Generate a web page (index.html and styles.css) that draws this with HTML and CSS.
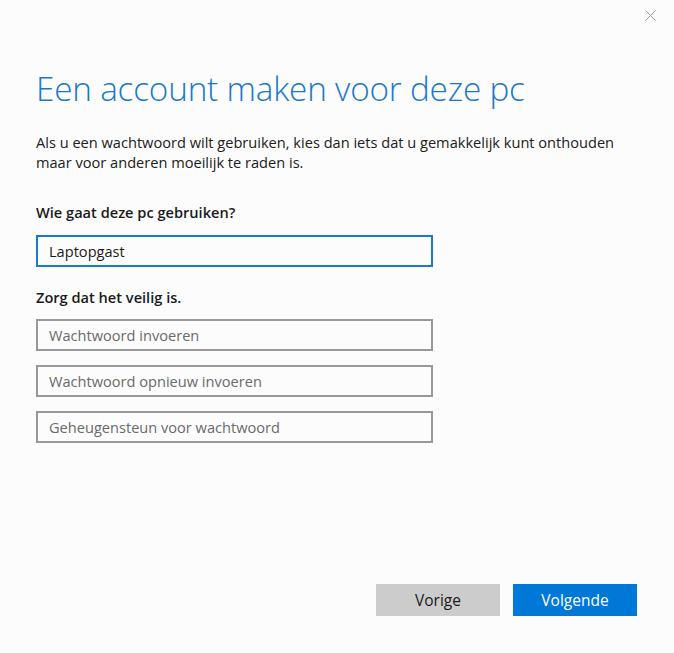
FILE: index.html
```html
<!DOCTYPE html>
<html lang="nl">
<head>
<meta charset="utf-8">
<title>Een account maken voor deze pc</title>
<link rel="stylesheet" href="styles.css">
</head>
<body>
<div class="dialog">
  <button class="close" aria-label="Sluiten">
    <svg width="11" height="11" viewBox="0 0 11 11"><path d="M0.5 0.5L10.5 10.5M10.5 0.5L0.5 10.5" stroke="#9a9a9a" stroke-width="1" fill="none"/></svg>
  </button>
  <h1 class="title">Een account maken voor deze pc</h1>
  <p class="intro">Als u een wachtwoord wilt gebruiken, kies dan iets dat u gemakkelijk kunt onthouden maar voor anderen moeilijk te raden is.</p>
  <div class="label label-first">Wie gaat deze pc gebruiken?</div>
  <div class="field field-active">Laptopgast</div>
  <div class="label label-second">Zorg dat het veilig is.</div>
  <div class="fields">
    <div class="field field-empty">Wachtwoord invoeren</div>
    <div class="field field-empty">Wachtwoord opnieuw invoeren</div>
    <div class="field field-empty">Geheugensteun voor wachtwoord</div>
  </div>
  <div class="actions">
    <button class="btn btn-secondary">Vorige</button>
    <button class="btn btn-primary">Volgende</button>
  </div>
</div>
</body>
</html>
```
FILE: styles.css
```css
* { box-sizing: border-box; }
html, body { margin: 0; padding: 0; }
body {
  background: #fcfcfc;
  font-family: "Open Sans", "Noto Sans", sans-serif;
  color: #1e1e1e;
}
.dialog {
  position: relative;
  height: 653px;
  padding: 0 37px 0 36px;
  display: flex;
  flex-direction: column;
}
.close {
  position: absolute;
  top: 10px;
  right: 18px;
  width: 11px;
  height: 11px;
  padding: 0;
  border: 0;
  background: none;
  line-height: 0;
}
.title {
  margin: 64px 0 0 0;
  font-weight: 300;
  font-size: 33.3px;
  line-height: 48px;
  color: #1979c9;
  letter-spacing: -0.2px;
}
.intro {
  margin: 20px 0 0 0;
  font-size: 14.6px;
  line-height: 20px;
  color: #202020;
  max-width: 600px;
}
.label {
  font-weight: 600;
  font-size: 14.6px;
  line-height: 20px;
  color: #1a1a1a;
}
.label-first { margin-top: 30px; }
.label-second { margin-top: 20px; }
.field {
  width: 397px;
  height: 32px;
  border: 2px solid #999999;
  padding: 0 11px;
  font-size: 14.6px;
  line-height: 28px;
  background: #fcfcfc;
}
.field-active {
  margin-top: 13px;
  border-color: #1c78c8;
  color: #1a1a1a;
}
.field-empty { color: #6a6a6a; }
.fields {
  margin-top: 12px;
  display: flex;
  flex-direction: column;
  gap: 14px;
}
.actions {
  margin-top: auto;
  margin-bottom: 37px;
  display: flex;
  justify-content: flex-end;
  gap: 13px;
}
.btn {
  width: 124px;
  height: 32px;
  border: 0;
  font-family: inherit;
  font-size: 15.5px;
  padding: 0;
}
.btn-secondary { background: #cccccc; color: #1a1a1a; }
.btn-primary { background: #0078d7; color: #ffffff; }
```
